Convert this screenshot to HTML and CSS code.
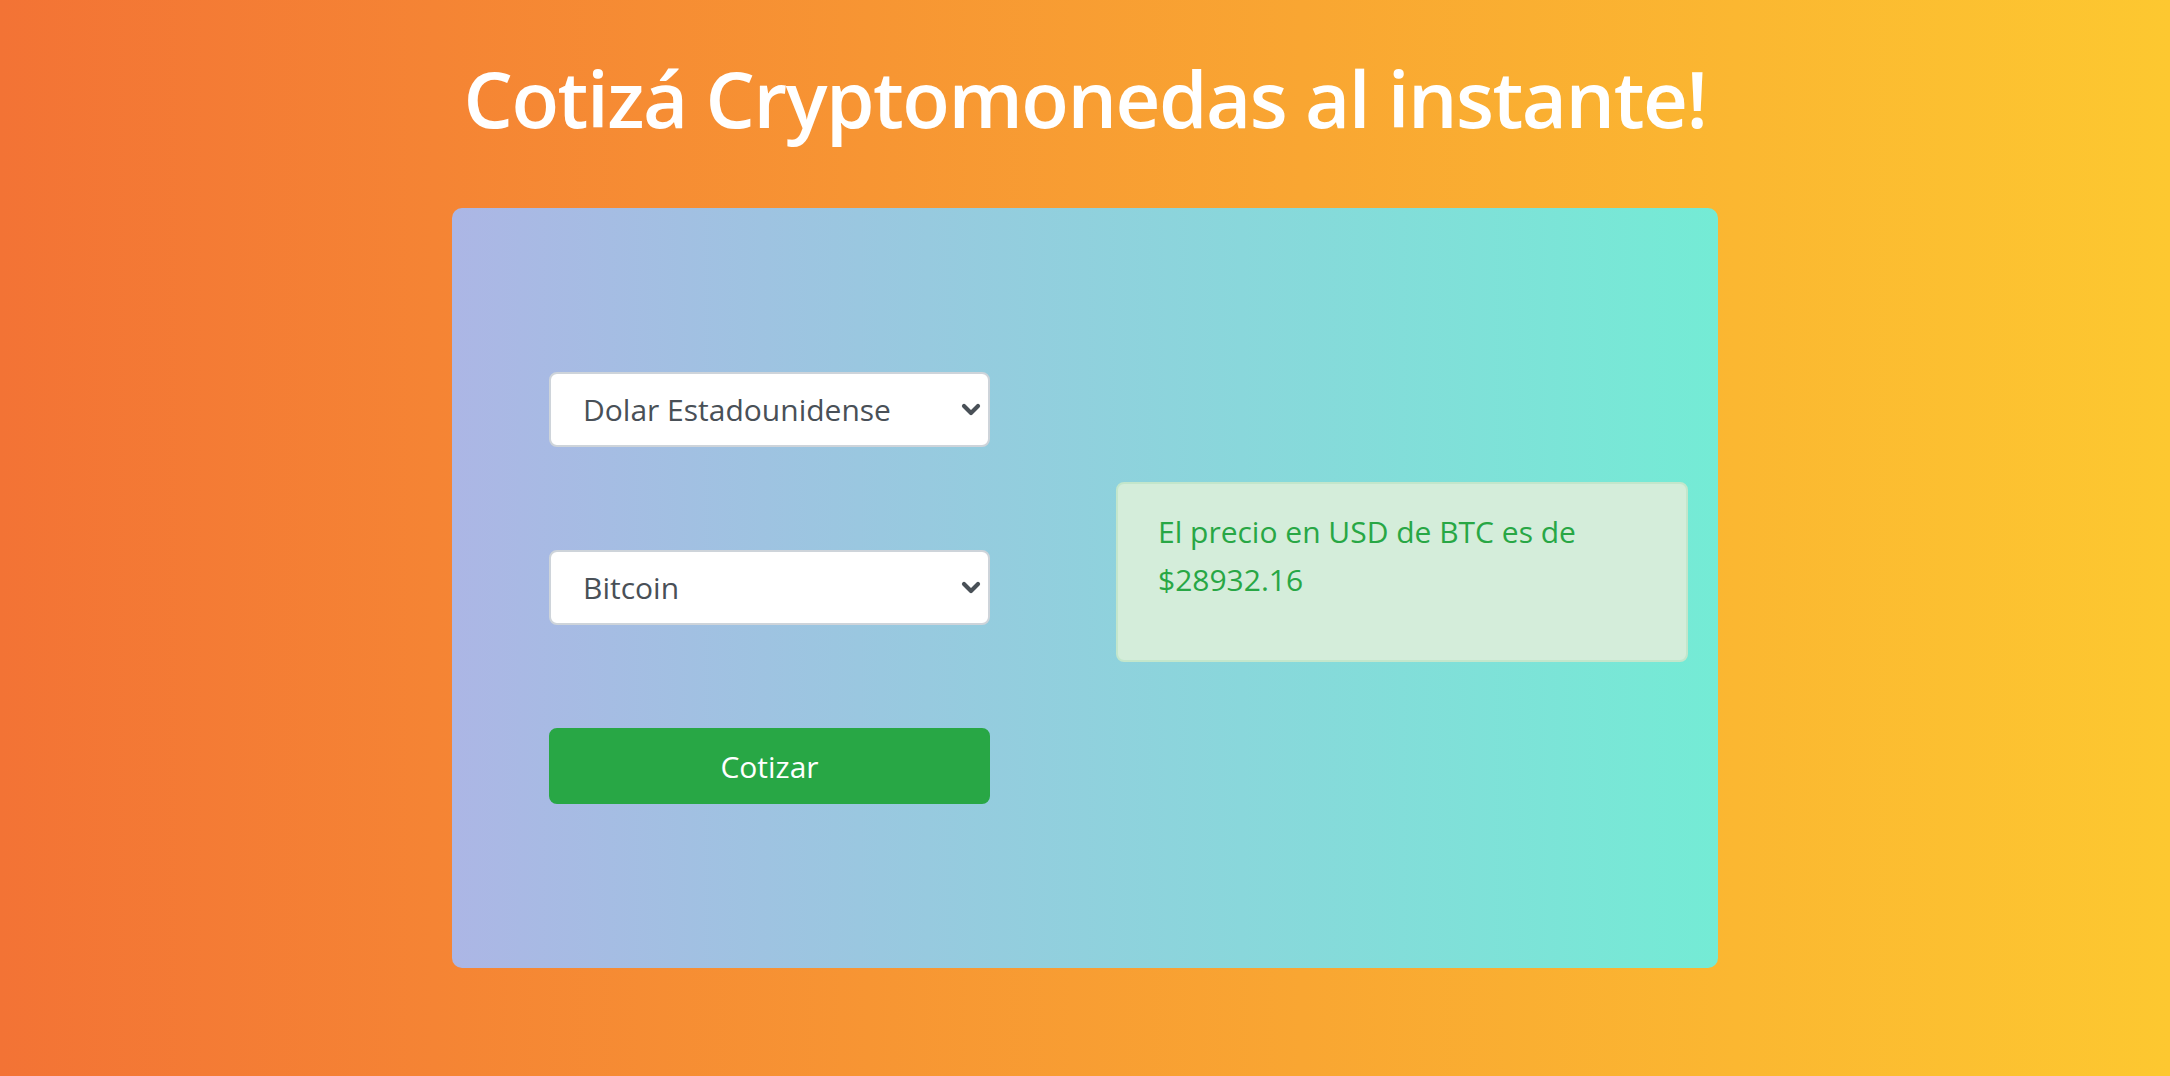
FILE: index.html
```html
<!DOCTYPE html>
<html lang="es">
<head>
<meta charset="utf-8">
<title>Cotizador</title>
<link rel="stylesheet" href="styles.css">
</head>
<body>
<h1 class="title">Cotizá Cryptomonedas al instante!</h1>
<div class="card">
  <form class="form">
    <div class="select-wrap">
      <select class="select"><option>Dolar Estadounidense</option></select>
      <svg class="chev" viewBox="0 0 20 13" width="20" height="13"><path d="M3 3 L10 10 L17 3" fill="none" stroke="#495057" stroke-width="4.2" stroke-linecap="round" stroke-linejoin="round"/></svg>
    </div>
    <div class="select-wrap">
      <select class="select"><option>Bitcoin</option></select>
      <svg class="chev" viewBox="0 0 20 13" width="20" height="13"><path d="M3 3 L10 10 L17 3" fill="none" stroke="#495057" stroke-width="4.2" stroke-linecap="round" stroke-linejoin="round"/></svg>
    </div>
    <button type="button" class="btn">Cotizar</button>
  </form>
  <div class="alert">
    <p class="alert-text">El precio en USD de BTC es de $28932.16</p>
  </div>
</div>
</body>
</html>
```

FILE: styles.css
```css
html {
  background: linear-gradient(to right, #f37335, #fdc830);
  min-height: 100%;
}
body {
  margin: 0;
  min-height: 1076px;
  background: linear-gradient(to right, #f37335, #fdc830);
  font-family: "Open Sans", "Noto Sans", sans-serif;
}
.title {
  margin: 50px 0 62px;
  text-align: center;
  color: #ffffff;
  font-size: 78px;
  line-height: 96px;
  font-weight: 600;
  letter-spacing: -1.5px;
}
.card {
  box-sizing: border-box;
  width: 1266px;
  height: 760px;
  margin: 0 auto;
  border-radius: 10px;
  background: linear-gradient(to right, #acb6e5, #74ebd5);
  display: grid;
  grid-template-columns: 441px 1fr;
  column-gap: 126px;
  align-items: center;
  padding: 0 30px 0 97px;
}
.form {
  display: flex;
  flex-direction: column;
  gap: 103px;
}
.select-wrap {
  position: relative;
  height: 75px;
}
.select {
  appearance: none;
  -webkit-appearance: none;
  box-sizing: border-box;
  width: 100%;
  height: 75px;
  border: 2px solid #ced4da;
  border-radius: 8px;
  background: #ffffff;
  color: #495057;
  font-family: "Open Sans", "Noto Sans", sans-serif;
  font-size: 30px;
  padding: 0 40px 0 32px;
  outline: none;
}
.chev {
  position: absolute;
  right: 9px;
  top: 31px;
  width: 20px;
  height: 13px;
}
.btn {
  box-sizing: border-box;
  height: 76px;
  border: 2px solid #28a745;
  border-radius: 8px;
  background: #28a745;
  color: #ffffff;
  font-family: "Open Sans", "Noto Sans", sans-serif;
  font-size: 30px;
  padding: 0;
}
.alert {
  box-sizing: border-box;
  background: #d4edda;
  border: 2px solid #c3e6cb;
  border-radius: 8px;
  padding: 24px 40px;
  margin-bottom: 32px;
  color: #28a745;
}
.alert-text {
  margin: 0 0 32px;
  font-size: 30px;
  line-height: 48px;
}
```
